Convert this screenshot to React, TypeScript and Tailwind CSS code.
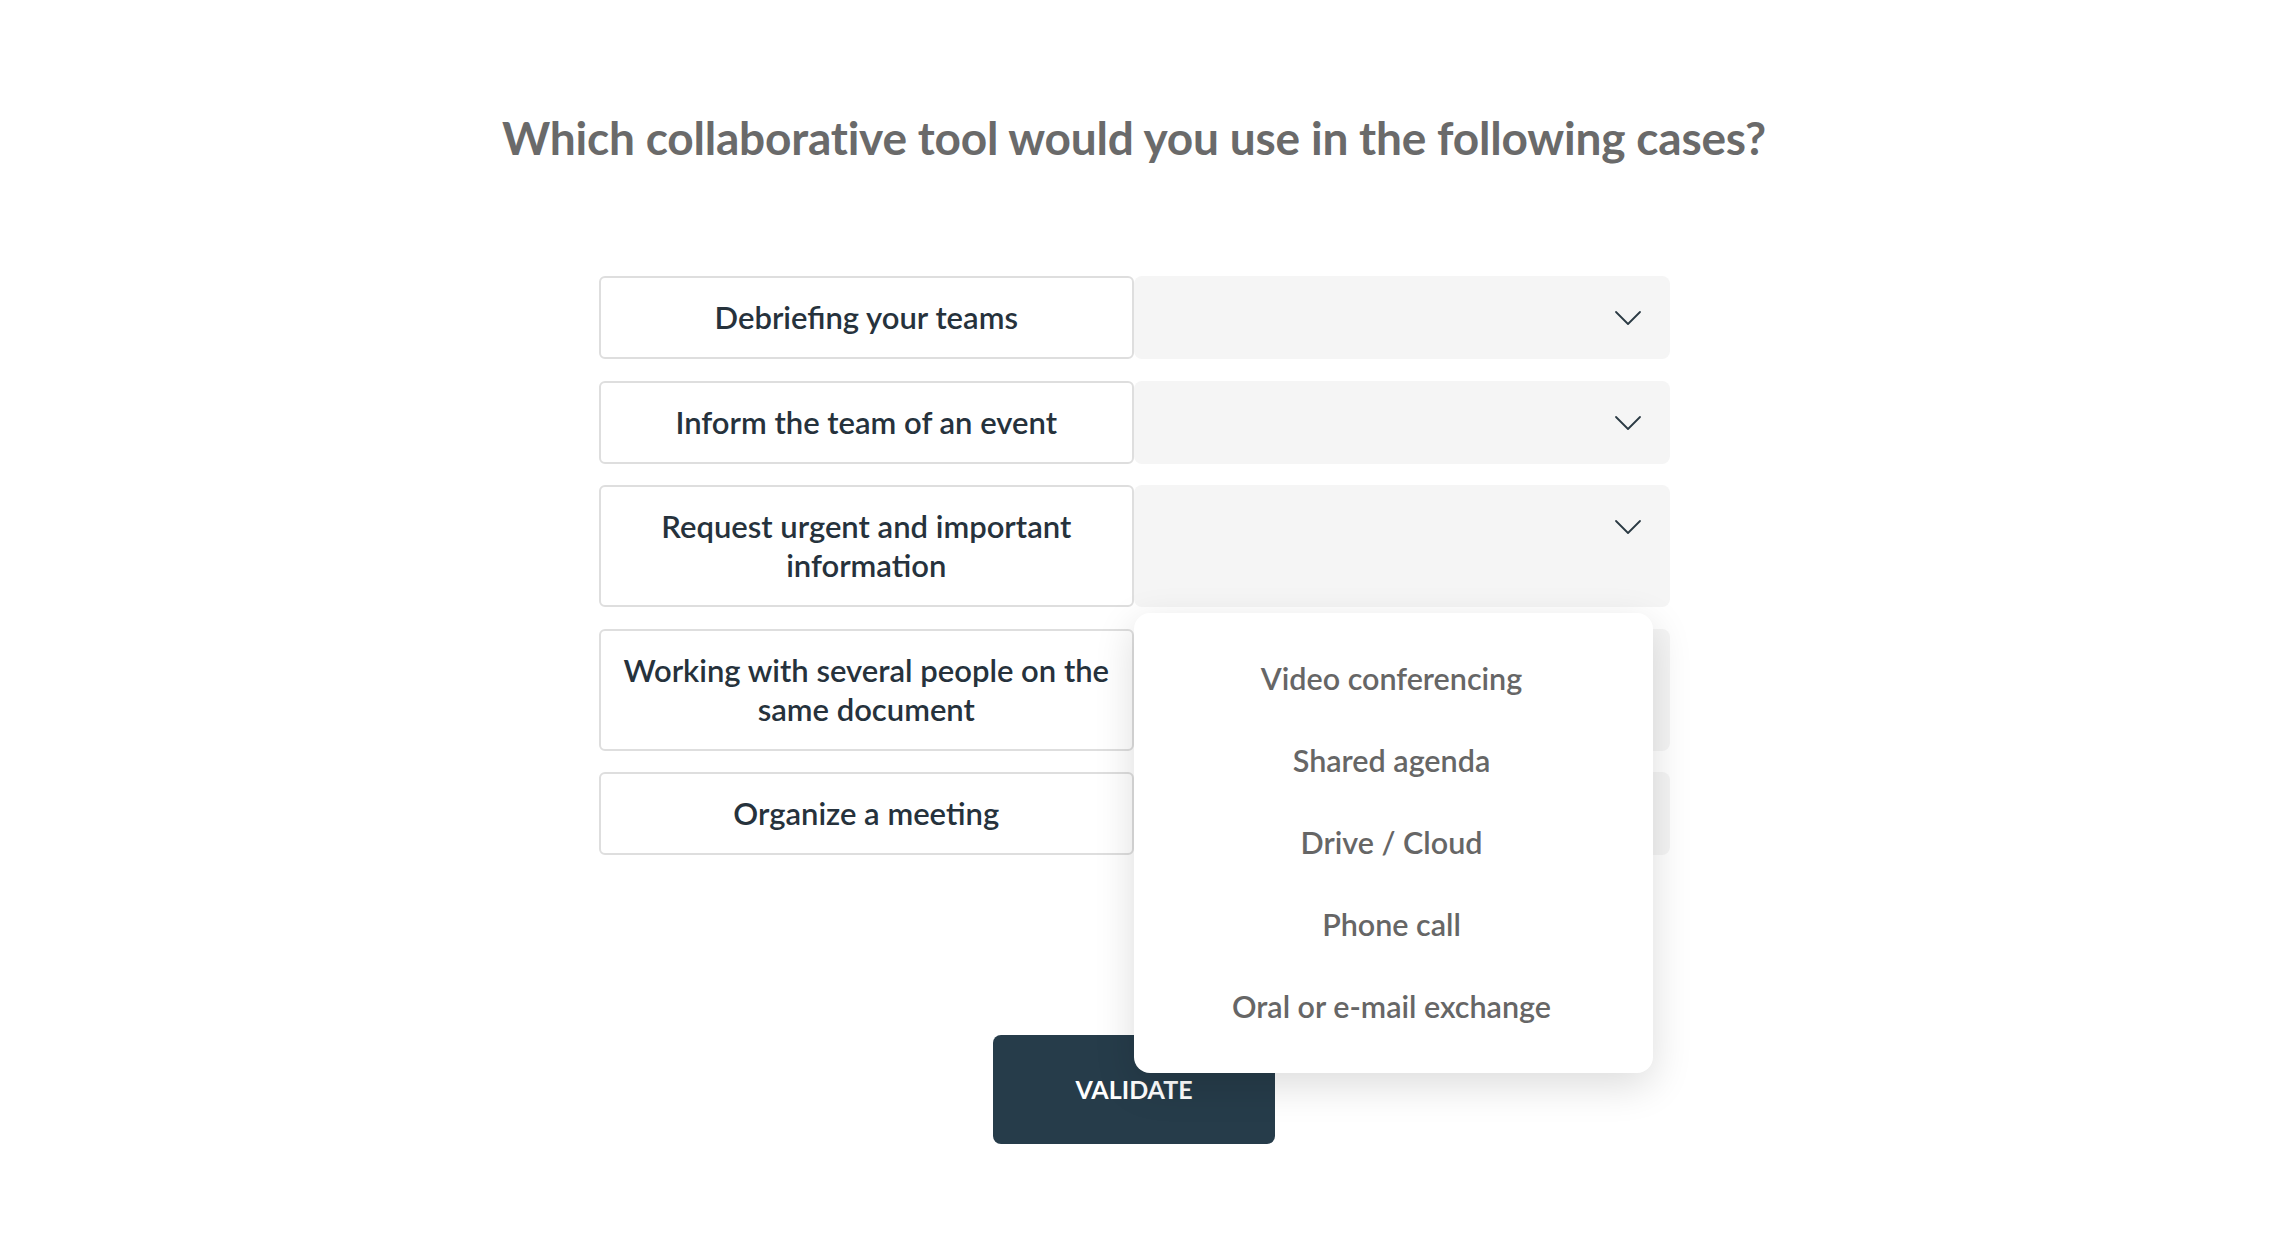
import { useState } from 'react'

const cases = [
  'Debriefing your teams',
  'Inform the team of an event',
  'Request urgent and important information',
  'Working with several people on the same document',
  'Organize a meeting',
]

const tools = ['Video conferencing', 'Shared agenda', 'Drive / Cloud', 'Phone call', 'Oral or e-mail exchange']

function Chevron() {
  return (
    <svg width="28" height="16" viewBox="0 0 28 16" fill="none" stroke="#2b3a44" strokeWidth="1.8" strokeLinecap="round" strokeLinejoin="round">
      <polyline points="2 2 14 14 26 2" />
    </svg>
  )
}

export default function App() {
  const [open] = useState(2)

  return (
    <main className="min-h-screen w-full bg-white font-['Lato',sans-serif] pr-3">
      <div className="flex flex-col items-center pt-[108px]">
        <h1 className="text-[46px] leading-[60px] font-bold text-[#6a6a6a] tracking-[-0.2px]">
          Which collaborative tool would you use in the following cases?
        </h1>

        {/* Matching rows */}
        <div className="mt-[108px] w-[1071px] flex flex-col gap-[21.5px]">
          {cases.map((label, i) => (
            <div key={label} className="grid grid-cols-2">
              <div className="flex items-center justify-center text-center rounded-md border-2 border-[#dedede] px-4 py-[20px] text-[31px] leading-[39px] font-semibold text-[#26323c]">
                {label}
              </div>
              <div className="relative">
                <div className="h-full rounded-lg bg-[#f5f5f5] flex items-start justify-end pr-[28px] pt-[34px]">
                  <Chevron />
                </div>
                {open === i && (
                  <div className="absolute left-0 top-[calc(100%+6px)] z-10 w-[519px] rounded-2xl bg-white py-[25px] shadow-[0_12px_40px_rgba(0,0,0,0.14)]">
                    {tools.map((t) => (
                      <div key={t} className="h-[82px] flex items-center justify-center pr-1 text-[30.5px] font-semibold text-[#666666]">
                        {t}
                      </div>
                    ))}
                  </div>
                )}
              </div>
            </div>
          ))}
        </div>

        <button className="mt-[180px] w-[282px] h-[109px] rounded-lg bg-[#263c4a] text-white text-[25px] font-bold">
          VALIDATE
        </button>
      </div>
    </main>
  )
}
